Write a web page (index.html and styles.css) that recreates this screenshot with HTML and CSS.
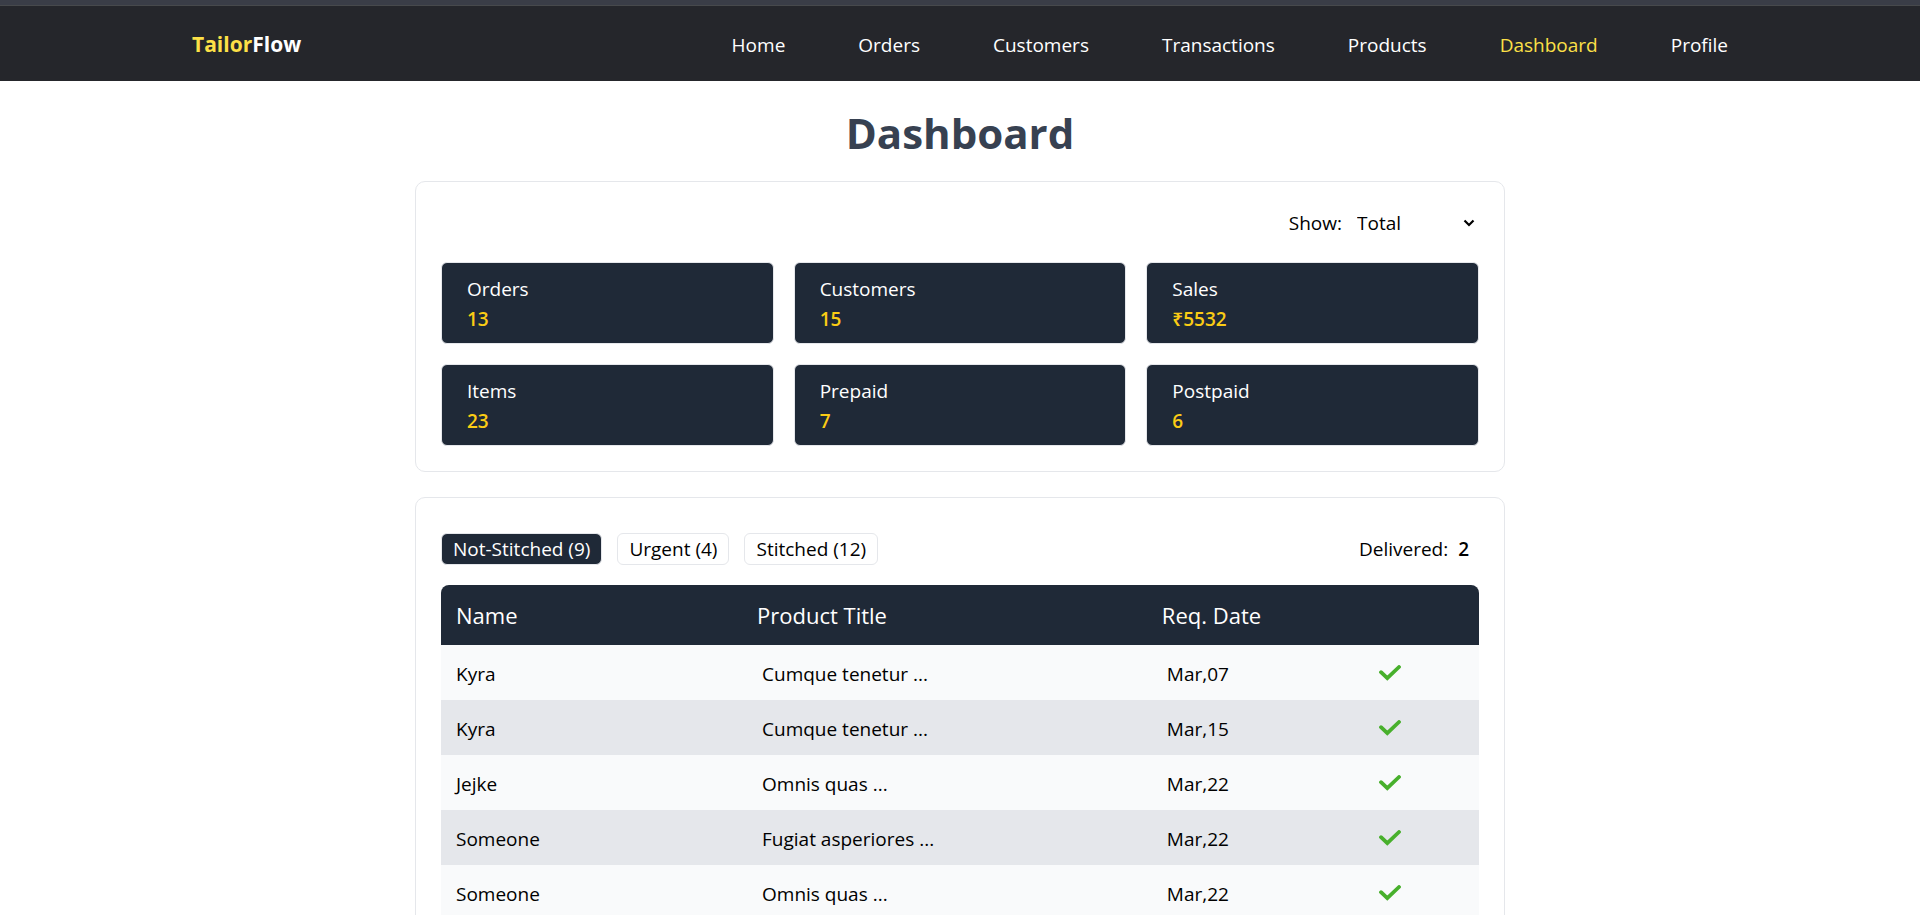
FILE: index.html
```html
<!DOCTYPE html>
<html lang="en">
<head>
<meta charset="utf-8">
<meta name="viewport" content="width=device-width, initial-scale=1">
<title>TailorFlow</title>
<link rel="stylesheet" href="styles.css">
</head>
<body>
<svg class="sprite" aria-hidden="true">
  <symbol id="check" viewBox="0 0 22 16"><path d="M2 7.2 8.3 13.2 20 2" fill="none" stroke="currentColor" stroke-width="3.8" stroke-linecap="round" stroke-linejoin="miter"/></symbol>
</svg>
<header class="header">
  <a class="brand" href="#"><span class="brand-accent">Tailor</span>Flow</a>
  <nav class="nav">
    <a href="#">Home</a>
    <a href="#">Orders</a>
    <a href="#">Customers</a>
    <a href="#">Transactions</a>
    <a href="#">Products</a>
    <a class="active" href="#">Dashboard</a>
    <a href="#">Profile</a>
  </nav>
</header>
<main class="main">
  <h1 class="title">Dashboard</h1>
  <section class="panel">
    <div class="filter">
      <label for="range">Show:</label>
      <div class="select-wrap">
        <select id="range" class="select"><option>Total</option><option>This Month</option><option>Today</option></select>
        <svg class="chevron" viewBox="0 0 12 8" aria-hidden="true"><path d="M1.5 1.5 6 6l4.500-4.500" fill="none" stroke="currentColor" stroke-width="2.2"/></svg>
      </div>
    </div>
    <div class="stats">
      <div class="stat"><div>Orders</div><div class="value">13</div></div>
      <div class="stat"><div>Customers</div><div class="value">15</div></div>
      <div class="stat"><div>Sales</div><div class="value">₹5532</div></div>
      <div class="stat"><div>Items</div><div class="value">23</div></div>
      <div class="stat"><div>Prepaid</div><div class="value">7</div></div>
      <div class="stat"><div>Postpaid</div><div class="value">6</div></div>
    </div>
  </section>
  <section class="panel">
    <div class="toolbar">
      <div class="tabs">
        <button class="tab selected" type="button">Not-Stitched (9)</button>
        <button class="tab" type="button">Urgent (4)</button>
        <button class="tab" type="button">Stitched (12)</button>
      </div>
      <p class="delivered">Delivered: <strong>2</strong></p>
    </div>
    <table class="table">
      <colgroup><col class="col-name"><col class="col-product"><col class="col-date"><col></colgroup>
      <thead><tr><th>Name</th><th>Product Title</th><th>Req. Date</th><th></th></tr></thead>
      <tbody>
        <tr><td>Kyra</td><td>Cumque tenetur ...</td><td>Mar,07</td><td><button class="done" type="button" aria-label="Mark stitched"><svg class="check"><use href="#check"/></svg></button></td></tr>
        <tr><td>Kyra</td><td>Cumque tenetur ...</td><td>Mar,15</td><td><button class="done" type="button" aria-label="Mark stitched"><svg class="check"><use href="#check"/></svg></button></td></tr>
        <tr><td>Jejke</td><td>Omnis quas ...</td><td>Mar,22</td><td><button class="done" type="button" aria-label="Mark stitched"><svg class="check"><use href="#check"/></svg></button></td></tr>
        <tr><td>Someone</td><td>Fugiat asperiores ...</td><td>Mar,22</td><td><button class="done" type="button" aria-label="Mark stitched"><svg class="check"><use href="#check"/></svg></button></td></tr>
        <tr><td>Someone</td><td>Omnis quas ...</td><td>Mar,22</td><td><button class="done" type="button" aria-label="Mark stitched"><svg class="check"><use href="#check"/></svg></button></td></tr>
      </tbody>
    </table>
  </section>
</main>
</body>
</html>
```
FILE: styles.css
```css
* { box-sizing: border-box; }
html { scrollbar-width: none; }
body {
  margin: 0;
  background: #fff;
  color: #000;
  font: 19px/30px "Segoe UI", "Open Sans", "Noto Sans", sans-serif;
}
button, select { font: inherit; color: inherit; }
.sprite { position: absolute; width: 0; height: 0; }

.header {
  display: flex;
  align-items: baseline;
  justify-content: space-between;
  padding: 24px 10% 21px;
  background: linear-gradient(#3a3d47 5px, #47494c 5px 6px, #25262b 6px);
}
.brand, .nav a { color: #fff; text-decoration: none; }
.brand { font-size: 21px; font-weight: 700; }
.brand .brand-accent, .nav .active { color: #fde047; }
.nav { display: flex; gap: 73px; padding-top: 6px; }

.main { max-width: 1090px; margin: 0 auto; }
.title {
  margin: 0;
  padding: 22px 0 18px;
  color: #374151;
  font-size: 42px;
  line-height: 60px;
  text-align: center;
}
.panel {
  margin-bottom: 25px;
  padding: 25px;
  border: 1px solid #e5e7eb;
  border-radius: 10px;
}

.filter {
  display: flex;
  align-items: center;
  justify-content: flex-end;
  gap: 10px;
  padding: 1px 0 24px;
}
.select-wrap { position: relative; }
.select {
  display: block;
  width: 127px;
  height: 30px;
  padding: 0 5px;
  border: 0;
  background: transparent;
  appearance: none;
}
.chevron { position: absolute; top: 11px; right: 4px; width: 12px; height: 8px; pointer-events: none; }

.stats { display: grid; grid-template-columns: repeat(3, 1fr); gap: 20px; }
.stat {
  padding: 11px 25px 9px;
  border: 1px solid #e5e7eb;
  border-radius: 6px;
  background: #1f2937;
  color: #fff;
}
.value { color: #facc15; font-weight: 600; }

.toolbar {
  display: flex;
  align-items: center;
  justify-content: space-between;
  padding: 10px 10px 20px 0;
}
.tabs { display: flex; gap: 15px; }
.tab {
  padding: 0 11px;
  border: 1px solid #e5e7eb;
  border-radius: 6px;
  background: #fff;
}
.selected { background: #1f2937; color: #fff; }
.delivered { margin: 0; }
.delivered strong { margin-left: 5px; font-weight: 600; }

.table { width: 100%; table-layout: fixed; border-collapse: separate; border-spacing: 0; }
.col-name { width: 29%; }
.col-product { width: 39%; }
.col-date { width: 20%; }
th {
  padding: 15px;
  background: #1f2937;
  color: #fff;
  font-size: 22px;
  font-weight: 400;
  text-align: left;
  height: 60px;
}
th:first-child { border-top-left-radius: 8px; }
th:last-child { border-top-right-radius: 8px; }
td { height: 55px; padding: 2px 20px 0; background: #f9fafb; }
td:first-child { padding-left: 15px; }
td:last-child { padding-top: 0; }
tr:nth-child(even) td { background: #e5e7eb; }
.done { display: block; padding: 0 5px; border: 0; background: none; line-height: 0; color: #48b02c; }
.check { display: block; width: 22px; height: 16px; }
```
